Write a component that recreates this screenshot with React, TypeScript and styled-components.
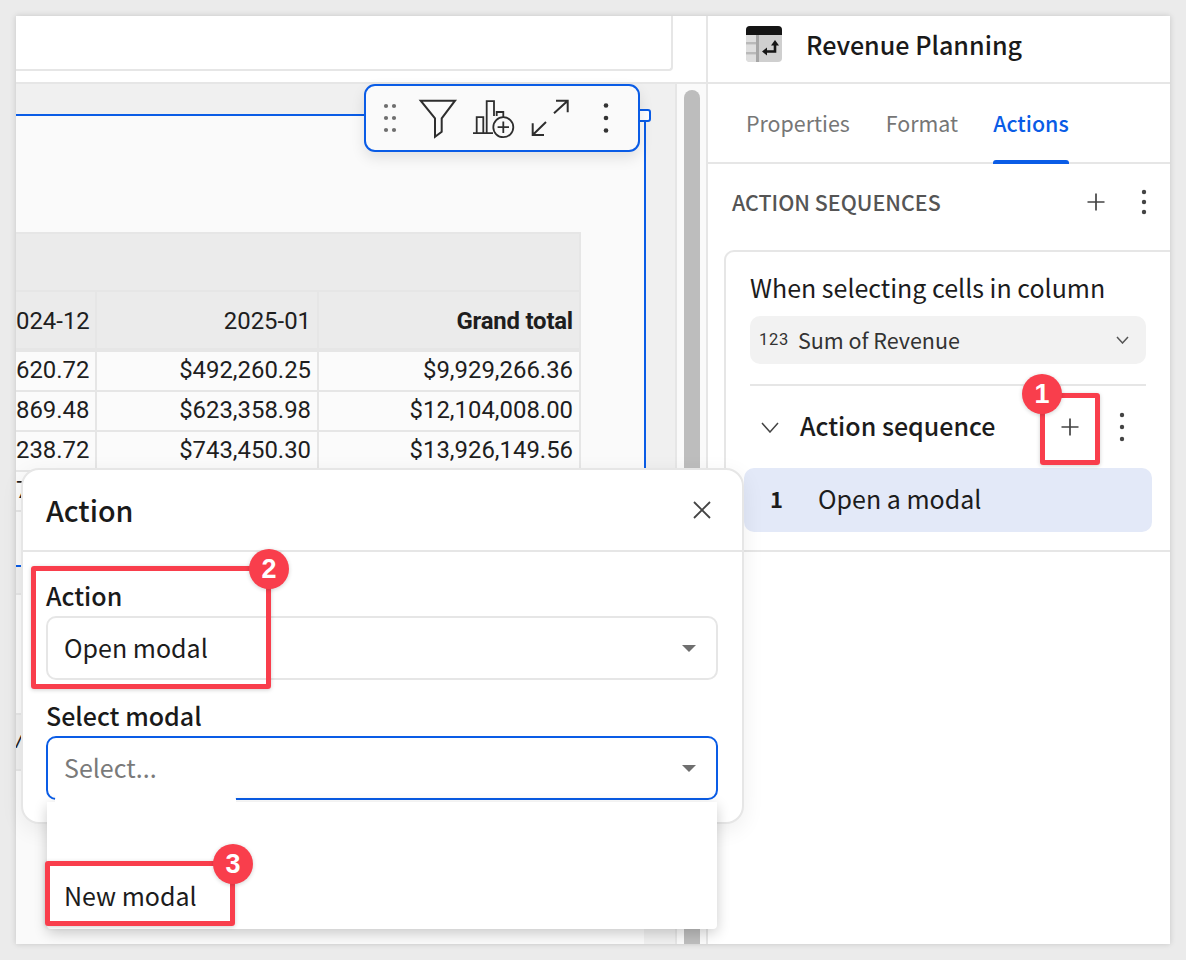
import React from "react";
import styled, { createGlobalStyle } from "styled-components";

const BLUE = "#0a5ce6";
const RED = "#f93e4c";
const LINE = "#e6e6e6";
const SANS = `"Noto Sans CJK JP", "Noto Sans", sans-serif`;

const Global = createGlobalStyle`
  html, body { margin: 0; padding: 0; background: #ebebeb; }
  body { font-family: ${SANS}; color: #1c1c1c; -webkit-font-smoothing: antialiased; }
  * { box-sizing: border-box; }
`;

const Page = styled.div`
  width: 1186px;
  height: 960px;
  padding: 16px;
  overflow: hidden;
`;
const Window = styled.div`
  position: relative;
  display: flex;
  width: 1154px;
  height: 928px;
  background: #fff;
  box-shadow: 0 0 6px rgba(0, 0, 0, 0.16);
`;

/* ---------- left area ---------- */
const Main = styled.main`
  display: flex;
  flex-direction: column;
  width: 692px;
  height: 100%;
  overflow: hidden;
  border-right: 2px solid ${LINE};
`;
const TopStrip = styled.div`
  flex: none;
  height: 68px;
  border-bottom: 2px solid ${LINE};
`;
const SearchBox = styled.div`
  width: 657px;
  height: 55px;
  background: #fff;
  border-right: 2px solid ${LINE};
  border-bottom: 2px solid ${LINE};
  border-bottom-right-radius: 4px;
`;
const Workspace = styled.div`
  flex: 1;
  display: flex;
  min-height: 0;
`;
const Canvas = styled.div`
  display: flex;
  flex-direction: column;
  width: 661px;
  background: #f0f0f0;
  border-right: 2px solid ${LINE};
`;
const CanvasBand = styled.div`
  flex: none;
  height: 30px;
`;
const Element = styled.section`
  flex: none;
  width: 630px;
  height: 453px;
  padding-top: 116px;
  background: #fafafa;
  border-top: 2px solid ${BLUE};
  border-right: 2px solid ${BLUE};
  border-bottom: 2px solid ${BLUE};
  overflow: hidden;
`;
const TableGrid = styled.div`
  display: grid;
  grid-template-columns: 81px 222px 262px;
  width: 565px;
`;
const GroupHeader = styled.div`
  grid-column: 1 / -1;
  height: 60px;
  background: #ebebeb;
  border: 2px solid ${LINE};
  border-left: 0;
`;
const Cell = styled.div<{ $head?: boolean; $strong?: boolean; $inset?: number }>`
  height: ${(p) => (p.$head ? "60px" : "40px")};
  padding-right: ${(p) => p.$inset ?? 6}px;
  text-align: right;
  white-space: nowrap;
  overflow: hidden;
  font-family: Roboto, sans-serif;
  font-size: 23.9px;
  font-weight: ${(p) => (p.$strong ? 700 : 400)};
  letter-spacing: ${(p) => (p.$strong ? "-0.2px" : "0")};
  line-height: ${(p) => (p.$head ? "58px" : "37px")};
  color: #1e1e1e;
  background: ${(p) => (p.$head ? "#ebebeb" : "#fbfbfb")};
  border-right: 2px solid ${LINE};
  border-bottom: ${(p) => (p.$head ? "4px" : "2px")} solid ${LINE};
`;
const LowerBlock = styled.div`
  flex: 1;
  width: 628px;
  margin-top: 26px;
  padding-top: 118px;
  background: #fafafa;
  border-top: 2px solid ${LINE};
`;
const LowerHead = styled.div`
  height: 58px;
  padding-top: 17px;
  background: #efefef;
  border-top: 2px solid ${LINE};
  border-bottom: 2px solid ${LINE};
  font-family: Roboto, sans-serif;
  font-size: 16px;
  font-style: italic;
  font-weight: 700;
  line-height: 20px;
  color: #1e1e1e;
`;
const ScrollTrack = styled.div`
  flex: 1;
  padding: 6px 3px 0 7px;
  background: #fafafa;
`;
const ScrollThumb = styled.div`
  width: 16px;
  height: 100%;
  background: #bdbdbd;
  border-radius: 8px 8px 0 0;
`;

/* ---------- right panel ---------- */
const Panel = styled.aside`
  flex: 1;
  display: flex;
  flex-direction: column;
  min-width: 0;
`;
const PanelHeader = styled.header`
  flex: none;
  display: flex;
  align-items: center;
  gap: 24px;
  height: 66px;
  padding: 0 0 10px 38px;
`;
const PanelTitle = styled.h1`
  margin: 0;
  font-size: 25.1px;
  font-weight: 500;
  line-height: 36px;
  color: #1a1a1a;
`;
const Tabs = styled.nav`
  flex: none;
  display: flex;
  gap: 36px;
  height: 82px;
  padding-left: 38px;
  border-top: 2px solid ${LINE};
  border-bottom: 2px solid ${LINE};
`;
const Tab = styled.div<{ $active?: boolean }>`
  position: relative;
  height: 78px;
  margin-left: ${(p) => (p.$active ? -1 : 0)}px;
  font-size: 21.4px;
  font-weight: ${(p) => (p.$active ? 500 : 400)};
  line-height: 78px;
  color: ${(p) => (p.$active ? BLUE : "#767676")};
  ${(p) =>
    p.$active
      ? `&::after { content: ""; position: absolute; left: 0; right: 0; bottom: -2px; height: 4px; background: ${BLUE}; border-radius: 3px 3px 0 0; }`
      : ""}
`;
const SectionHead = styled.div`
  flex: none;
  display: flex;
  align-items: center;
  height: 86px;
  padding: 0 14px 10px 24px;
`;
const SectionTitle = styled.div`
  flex: 1;
  font-size: 21.4px;
  font-weight: 500;
  line-height: 30px;
  color: #555;
`;
const IconSlot = styled.span<{ $w?: number; $mr?: number }>`
  flex: none;
  display: inline-flex;
  align-items: center;
  justify-content: center;
  width: ${(p) => p.$w ?? 24}px;
  margin-right: ${(p) => p.$mr ?? 0}px;
  color: #444;
`;
const Card = styled.div`
  flex: none;
  width: 446px;
  height: 302px;
  margin-left: 16px;
  padding: 15px 24px 0 24px;
  border: 2px solid ${LINE};
  border-right: 0;
  border-top-left-radius: 10px;
  border-bottom-left-radius: 10px;
`;
const CardLabel = styled.div`
  font-size: 25px;
  line-height: 40px;
  color: #1c1c1c;
`;
const ColumnSelect = styled.div`
  display: flex;
  align-items: center;
  height: 48px;
  margin-top: 9px;
  padding: 0 17px 0 9px;
  background: #f2f2f2;
  border-radius: 10px;
  color: #333;
`;
const TypeTag = styled.span`
  margin-right: 9px;
  font-family: Roboto, sans-serif;
  font-size: 16.5px;
  letter-spacing: 0.7px;
  line-height: 24px;
  color: #333;
`;
const ColumnName = styled.span`
  flex: 1;
  font-size: 21.5px;
  line-height: 48px;
`;
const CardDivider = styled.div`
  height: 2px;
  margin-top: 20px;
  background: ${LINE};
`;
const SequenceRow = styled.div`
  display: flex;
  align-items: center;
  height: 82px;
  padding-right: 12px;
`;
const SequenceTitle = styled.div`
  flex: 1;
  margin-left: 10px;
  margin-bottom: 4px;
  font-size: 25px;
  font-weight: 500;
  line-height: 36px;
  color: #1c1c1c;
`;
const StepRow = styled.div`
  display: flex;
  align-items: center;
  width: 408px;
  height: 64px;
  margin-left: -6px;
  padding-bottom: 4px;
  background: #e3e9f8;
  border-radius: 10px;
`;
const StepIndex = styled.span`
  width: 74px;
  padding-left: 26px;
  font-size: 22px;
  font-weight: 700;
  color: #1c1c1c;
`;
const StepName = styled.span`
  font-size: 25px;
  line-height: 36px;
  color: #1c1c1c;
`;

/* ---------- floating toolbar ---------- */
const Toolbar = styled.div`
  position: absolute;
  left: 348px;
  top: 68px;
  display: flex;
  align-items: center;
  width: 276px;
  height: 68px;
  padding-left: 16px;
  background: #fafafa;
  border: 2px solid ${BLUE};
  border-radius: 11px;
  box-shadow: 0 6px 14px rgba(0, 0, 0, 0.1);
`;
const ToolSvg = styled.svg<{ $ml?: number }>`
  flex: none;
  margin-left: ${(p) => p.$ml ?? 0}px;
  display: block;
`;
const ResizeHandle = styled.div`
  position: absolute;
  left: 622px;
  top: 93px;
  width: 13px;
  height: 13px;
  background: #fff;
  border: 2px solid ${BLUE};
  border-radius: 0 3px 3px 0;
`;

/* ---------- dialog ---------- */
const Dialog = styled.div`
  position: absolute;
  left: 5px;
  top: 452px;
  width: 723px;
  height: 356px;
  background: #fff;
  border: 2px solid ${LINE};
  border-radius: 18px;
  box-shadow: 0 6px 22px rgba(0, 0, 0, 0.07);
`;
const DialogHead = styled.div`
  display: flex;
  align-items: center;
  justify-content: space-between;
  height: 82px;
  padding: 0 31px 0 23px;
  border-bottom: 2px solid ${LINE};
`;
const DialogTitle = styled.h2`
  margin: 0;
  font-size: 28.7px;
  font-weight: 500;
  line-height: 40px;
  color: #1a1a1a;
`;
const DialogBody = styled.div`
  padding: 26px 24px 0 23px;
`;
const FieldLabel = styled.label`
  display: block;
  height: 38px;
  font-size: 25px;
  font-weight: 500;
  line-height: 34px;
  color: #1a1a1a;
`;
const Field = styled.div<{ $focus?: boolean; $last?: boolean }>`
  position: relative;
  display: flex;
  align-items: center;
  justify-content: space-between;
  height: 64px;
  margin-bottom: ${(p) => (p.$last ? 0 : 18)}px;
  padding: 0 20px 0 16px;
  border: 2px solid ${(p) => (p.$focus ? BLUE : LINE)};
  border-radius: 10px;
  background: #fff;
`;
const FieldValue = styled.span<{ $muted?: boolean }>`
  padding-bottom: 3px;
  font-size: 25px;
  line-height: 40px;
  color: ${(p) => (p.$muted ? "#7a7a7a" : "#1c1c1c")};
`;
const Caret = styled.span`
  width: 0;
  height: 0;
  border-left: 7px solid transparent;
  border-right: 7px solid transparent;
  border-top: 7px solid #6f6f6f;
`;
const Dropdown = styled.div`
  position: absolute;
  left: -1px;
  right: -1px;
  top: 64px;
  height: 127px;
  padding: 72px 0 0 17px;
  background: #fff;
  border-radius: 0 0 4px 4px;
  box-shadow: 0 4px 14px rgba(0, 0, 0, 0.2);
  &::before {
    content: "";
    position: absolute;
    left: 8px;
    top: -13px;
    width: 181px;
    height: 14px;
    background: #fff;
    border-radius: 10px 10px 0 0;
  }
`;
const Option = styled.div`
  font-size: 25px;
  line-height: 42px;
  color: #1c1c1c;
`;

/* ---------- annotations ---------- */
const Callout = styled.div<{ $x: number; $y: number; $w: number; $h: number }>`
  position: absolute;
  left: ${(p) => p.$x}px;
  top: ${(p) => p.$y}px;
  width: ${(p) => p.$w}px;
  height: ${(p) => p.$h}px;
  border: 5px solid ${RED};
  border-radius: 3px;
  box-shadow: 0 1px 4px rgba(0, 0, 0, 0.18);
`;
const Badge = styled.div`
  position: absolute;
  right: -23px;
  top: -22px;
  width: 40px;
  height: 40px;
  border-radius: 50%;
  background: ${RED};
  color: #fff;
  font-family: "Liberation Sans", sans-serif;
  font-size: 27px;
  font-weight: 700;
  line-height: 40px;
  text-align: center;
  box-shadow: 0 1px 4px rgba(0, 0, 0, 0.18);
`;
const BadgeLeft = styled(Badge)`
  right: auto;
  left: -23px;
  top: -24px;
`;

/* ---------- icons ---------- */
const Plus = () => (
  <svg width="18" height="18" viewBox="0 0 18 18" fill="none" stroke="currentColor" strokeWidth="1.7">
    <path d="M9 0.5V17.5M0.5 9H17.5" />
  </svg>
);
const Dots = ({ gap }: { gap: number }) => (
  <svg width="8" height="32" viewBox="0 0 8 32" fill="#444">
    <circle cx="4" cy={16 - gap} r="2.2" />
    <circle cx="4" cy="16" r="2.2" />
    <circle cx="4" cy={16 + gap} r="2.2" />
  </svg>
);
const Chevron = ({ w, h, sw, color }: { w: number; h: number; sw: number; color: string }) => (
  <svg width={w} height={h} viewBox={`0 0 ${w} ${h}`} fill="none" stroke={color} strokeWidth={sw}>
    <path d={`M1 1L${w / 2} ${h - 1}L${w - 1} 1`} />
  </svg>
);
const TableIcon = () => (
  <svg width="36" height="36" viewBox="0 0 36 36">
    <rect width="36" height="36" rx="4" fill="#cfcfcf" />
    <path d="M0 9V4a4 4 0 0 1 4-4h28a4 4 0 0 1 4 4v5z" fill="#151515" />
    <path d="M0 9h10v27H4a4 4 0 0 1-4-4z" fill="#dedede" />
    <rect x="10" y="9" width="3" height="27" fill="#a6a6a6" />
    <rect x="0" y="16" width="10" height="2.4" fill="#b9b9b9" />
    <rect x="0" y="26" width="10" height="2.4" fill="#b9b9b9" />
    <path d="M29 18V25.5H19" fill="none" stroke="#151515" strokeWidth="2.6" />
    <path d="M29 14L33 19.5H25zM16 25.5L21 21.5V29.5z" fill="#151515" />
  </svg>
);

const rows = [
  ["620.72", "$492,260.25", "$9,929,266.36"],
  ["869.48", "$623,358.98", "$12,104,008.00"],
  ["238.72", "$743,450.30", "$13,926,149.56"],
];

export default function App() {
  return (
    <Page>
      <Global />
      <Window>
        <Main>
          <TopStrip>
            <SearchBox />
          </TopStrip>
          <Workspace>
            <Canvas>
              <CanvasBand />
              <Element>
                <TableGrid>
                  <GroupHeader />
                  <Cell $head>024-12</Cell>
                  <Cell $head>2025-01</Cell>
                  <Cell $head $strong>
                    Grand total
                  </Cell>
                  {rows.flat().map((value) => (
                    <Cell key={value}>{value}</Cell>
                  ))}
                  <Cell $inset={66}>7</Cell>
                  <Cell />
                  <Cell />
                </TableGrid>
              </Element>
              <LowerBlock>
                <LowerHead>/</LowerHead>
              </LowerBlock>
            </Canvas>
            <ScrollTrack>
              <ScrollThumb />
            </ScrollTrack>
          </Workspace>
        </Main>

        <Panel>
          <PanelHeader>
            <TableIcon />
            <PanelTitle>Revenue Planning</PanelTitle>
          </PanelHeader>
          <Tabs>
            <Tab>Properties</Tab>
            <Tab>Format</Tab>
            <Tab $active>Actions</Tab>
          </Tabs>
          <SectionHead>
            <SectionTitle>ACTION SEQUENCES</SectionTitle>
            <IconSlot $w={24} $mr={24}>
              <Plus />
            </IconSlot>
            <IconSlot $w={24}>
              <Dots gap={10} />
            </IconSlot>
          </SectionHead>
          <Card>
            <CardLabel>When selecting cells in column</CardLabel>
            <ColumnSelect>
              <TypeTag>123</TypeTag>
              <ColumnName>Sum of Revenue</ColumnName>
              <Chevron w={13} h={8} sw={1.5} color="#555" />
            </ColumnSelect>
            <CardDivider />
            <SequenceRow>
              <IconSlot $w={40} $mr={0}>
                <Chevron w={18} h={11} sw={1.5} color="#444" />
              </IconSlot>
              <SequenceTitle>Action sequence</SequenceTitle>
              <IconSlot $w={24} $mr={28}>
                <Plus />
              </IconSlot>
              <IconSlot $w={24} $mr={0}>
                <Dots gap={12} />
              </IconSlot>
            </SequenceRow>
            <StepRow>
              <StepIndex>1</StepIndex>
              <StepName>Open a modal</StepName>
            </StepRow>
          </Card>
        </Panel>

        <ResizeHandle />
        <Toolbar>
          <ToolSvg width="16" height="32" viewBox="0 0 16 32" fill="#6e6e6e">
            {[4, 16, 28].flatMap((y) =>
              [4, 12].map((x) => <circle key={`${x}-${y}`} cx={x} cy={y} r="2.1" />)
            )}
          </ToolSvg>
          <ToolSvg $ml={20} width="40" height="42" viewBox="0 0 40 42" fill="none" stroke="#2e2e2e" strokeWidth="2">
            <path d="M2.7 3.7H37L23.7 21.3V34.7L17 39.7V21.3Z" />
          </ToolSvg>
          <ToolSvg $ml={12} width="50" height="45" viewBox="0 0 50 45" fill="none" stroke="#2e2e2e" strokeWidth="1.8">
            <path d="M3 37.2H23M6.7 37.2V21.2H13.3V37.2M16.7 37.2V5.2H24V20M26.7 20V16H33.3V21" />
            <circle cx="33.3" cy="31.2" r="10" />
            <path d="M33.3 25.5V36.9M27.6 31.2H39" />
          </ToolSvg>
          <ToolSvg $ml={10} width="40" height="40" viewBox="0 0 40 40" fill="none" stroke="#2e2e2e" strokeWidth="2">
            <path d="M2.7 25.3V37H14M2.7 37L16 24M26 2.7H37.7V14.3M37.7 2.7L24 15.3" />
          </ToolSvg>
          <ToolSvg $ml={32} width="8" height="32" viewBox="0 0 8 32" fill="#333">
            <circle cx="4" cy="3.5" r="2.3" />
            <circle cx="4" cy="16" r="2.3" />
            <circle cx="4" cy="28.5" r="2.3" />
          </ToolSvg>
        </Toolbar>

        <Dialog>
          <DialogHead>
            <DialogTitle>Action</DialogTitle>
            <svg width="18" height="18" viewBox="0 0 18 18" fill="none" stroke="#444" strokeWidth="1.8">
              <path d="M1 1L17 17M17 1L1 17" />
            </svg>
          </DialogHead>
          <DialogBody>
            <FieldLabel>Action</FieldLabel>
            <Field>
              <FieldValue>Open modal</FieldValue>
              <Caret />
            </Field>
            <FieldLabel>Select modal</FieldLabel>
            <Field $focus $last>
              <FieldValue $muted>Select...</FieldValue>
              <Caret />
              <Dropdown>
                <Option>New modal</Option>
              </Dropdown>
            </Field>
          </DialogBody>
        </Dialog>

        <Callout $x={1024} $y={377} $w={60} $h={72}>
          <BadgeLeft>1</BadgeLeft>
        </Callout>
        <Callout $x={15} $y={550} $w={240} $h={123}>
          <Badge>2</Badge>
        </Callout>
        <Callout $x={29} $y={845} $w={190} $h={65}>
          <Badge>3</Badge>
        </Callout>
      </Window>
    </Page>
  );
}
